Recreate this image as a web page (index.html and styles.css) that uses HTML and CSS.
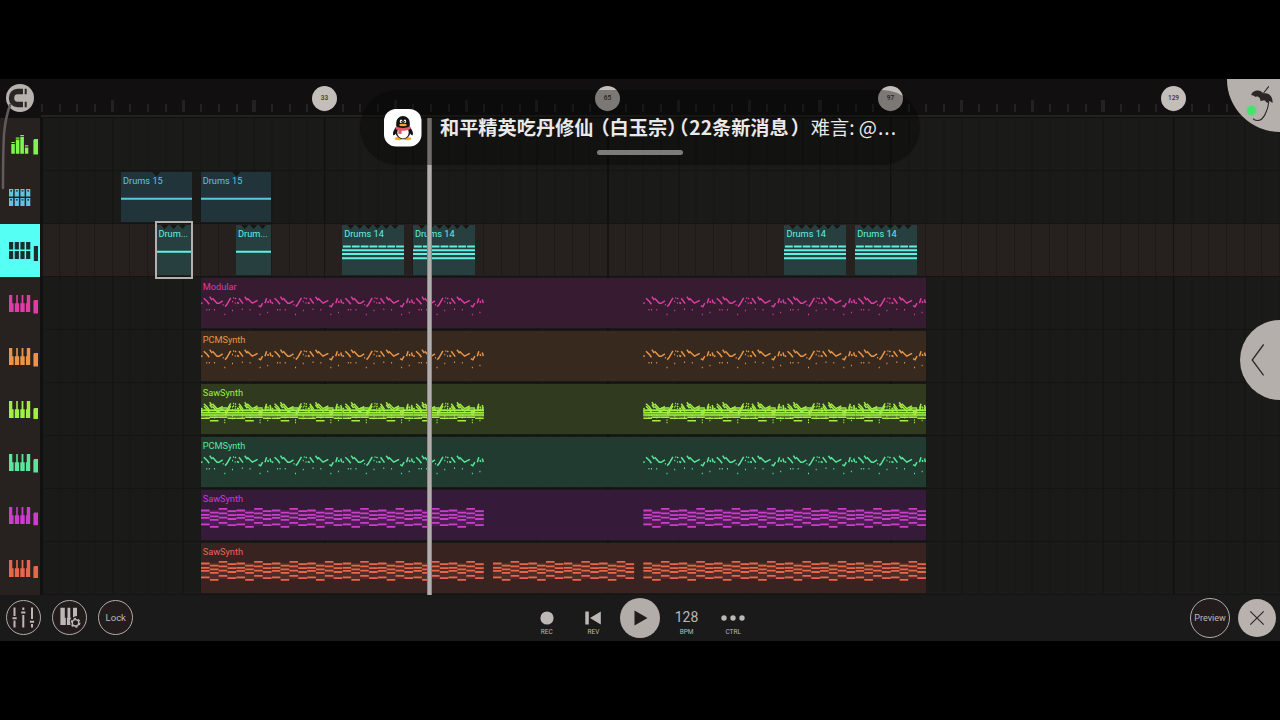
FILE: index.html
```html
<!DOCTYPE html>
<html lang="en">
<head>
    <meta charset="UTF-8">
    <title>Song Editor</title>
    <link rel="stylesheet" href="styles.css">
</head>
<body>

<!-- shared icons and note patterns -->
<svg class="defs" width="0" height="0">
    <symbol id="mixer" viewBox="0 0 40 53">
        <path d="M11.3 26h3.5v9.8h-3.5zM15.8 21.6h3.6v14.2h-3.6zM20.3 19h3.6v16.8h-3.6zM24.9 29.5h3.4v6.3h-3.4z"/>
        <path d="M11.3 23.9h3.5V25h-3.5zM15.8 19.5h3.6v1.2h-3.6zM20.3 17h3.6v1.2h-3.6zM24.9 27.3h3.4v1.1h-3.4zM33.4 22l1-1H38v15.5h-4.6z"/>
    </symbol>
    <symbol id="pads" viewBox="0 0 40 53">
        <path d="M9 18h4.2v7.4H9zM14.7 18h4.2v7.4h-4.2zM20.4 18h4.2v7.4h-4.2zM26.1 18h4.2v7.4h-4.2zM9 27h4.2v7.9H9zM14.7 27h4.2v7.9h-4.2zM20.4 27h4.2v7.9h-4.2zM26.1 27h4.2v7.9h-4.2z"/>
        <path class="pad-dots" d="M10.2 19.8h1.8M15.9 19.8h1.8M21.6 19.8h1.8M27.3 19.8h1.8M10.2 28.8h1.8M15.9 28.8h1.8M21.6 28.8h1.8M27.3 28.8h1.8"/>
    </symbol>
    <symbol id="keys" viewBox="0 0 40 53">
        <path d="M9 18h3.3v8.3h1.3v8.8H9zM16.2 18h1.6v8.3h1.3v8.8h-4.3v-8.8h1.4zM21.6 18h1.8v8.3h1.3v8.8h-4.4v-8.8h1.3zM26.8 18h3.4v17.1h-4.3v-8.8h.9z"/>
    </symbol>
    <symbol id="phrase" viewBox="0 0 71 50" overflow="visible">
        <path d="M0 24.6l1.5-1M2.8 19.3l3.4 3.2 2 2.8M8.7 17.7l2.3 3.4M11.5 19.3l4.5 5h2l3.7-2.4M21.7 25.8h1M24 27.6l1.7-1.7 4-7M32 19h1M31 22.5h1M34 19l1 1M33.7 24h1M36 23.5l2 1M38 19.3l4 5.3M43.7 17.8l2.6 3.6M46.3 19.2l5 5 5.3-2.8M57.6 26.6l2 1.2 2-3.6M64 24.2l1.6-5M66.8 22l.6 2M69 20.5l1 3.6"/>
        <path d="M5.3 30.8h1M7.8 30.8h1M13 30.8h1M23.3 35.4h1M31 31.4h1M40.8 30.2h1M48.6 30.8h1M58.6 35.4h1M66.2 33.4h1"/>
    </symbol>
    <symbol id="melody" viewBox="0 0 283 50">
        <use href="#phrase" width="71" height="50"/>
        <use href="#phrase" x="70.75" width="71" height="50"/>
        <use href="#phrase" x="141.5" width="71" height="50"/>
        <use href="#phrase" x="212.25" width="71" height="50"/>
    </symbol>
    <symbol id="progression" viewBox="0 0 71 50">
        <path d="M0 19.7h8.6M0 24h8.6M0 27h8.6M0 33.6h8.6M8.9 21.9h8.6M8.9 25.6h8.6M8.9 29.1h8.6M8.9 36h8.6M17.7 18h8.6M17.7 22.5h8.6M17.7 26.8h8.6M17.7 32h8.6M26.6 20.3h8.6M26.6 24.3h8.6M26.6 28.2h8.6M26.6 34.4h8.6"/>
        <path d="M35.4 19.7h8.6M35.4 24h8.6M35.4 27h8.6M35.4 33.6h8.6M44.2 21.9h8.6M44.2 25.6h8.6M44.2 29.1h8.6M44.2 36h8.6M53.1 18h8.6M53.1 22.5h8.6M53.1 26.8h8.6M53.1 32h8.6M61.9 20.3h8.6M61.9 24.3h8.6M61.9 28.2h8.6M61.9 34.4h8.6"/>
    </symbol>
    <symbol id="chords" viewBox="0 0 283 50">
        <use href="#progression" width="71" height="50"/>
        <use href="#progression" x="70.75" width="71" height="50"/>
        <use href="#progression" x="141.5" width="71" height="50"/>
        <use href="#progression" x="212.25" width="71" height="50"/>
    </symbol>
    <symbol id="chords-half" viewBox="0 0 141.5 50">
        <use href="#progression" width="71" height="50"/>
        <use href="#progression" x="70.75" width="71" height="50"/>
    </symbol>
    <symbol id="low-progression" viewBox="0 0 71 50">
        <path d="M0 25.5h71M0 28h71M0 30.3h71"/>
        <path d="M0 33.6h8.6M8.9 32.5h8.6M8.9 36h8.6M17.7 32.5h8.6M26.6 33.6h8.6M35.4 33.6h8.6M44.2 32.5h8.6M44.2 36h8.6M53.1 32.5h8.6M61.9 33.6h8.6M17.7 23.3h8.6M53.1 23.3h8.6"/>
    </symbol>
    <symbol id="low-chords" viewBox="0 0 283 50">
        <use href="#low-progression" width="71" height="50"/>
        <use href="#low-progression" x="70.75" width="71" height="50"/>
        <use href="#low-progression" x="141.5" width="71" height="50"/>
        <use href="#low-progression" x="212.25" width="71" height="50"/>
    </symbol>
    <symbol id="beat14" viewBox="0 0 62 50">
        <path class="notch" d="M5.2 0h7.2l-3.6 4zM14 0h7.2l-3.6 4zM22.9 0h7.2l-3.6 4zM31.7 0h7.2l-3.6 4zM40.6 0h7.2l-3.6 4zM49.4 0h7.2l-3.6 4z"/>
        <path d="M1 21.6h61" stroke-dasharray="7.8 1.05"/>
        <path d="M0 25.3h62M0 29h62M0 33.2h62"/>
    </symbol>
</svg>

<div class="app">
    <header class="ruler">
        <button class="magnet" aria-label="Snap">
            <svg width="28" height="28" viewBox="0 0 28 28">
                <path d="M17 7.5h-5.5c-3.5 0-6 2.5-6 6.5s2.5 6.5 6 6.5H17" fill="none" stroke="#2b2626" stroke-width="5.4"/>
                <path d="M18.7 4.8h2v5.4h-2zM18.7 17.8h2v5.4h-2z" fill="#2b2626"/>
            </svg>
        </button>
        <div class="bars">
            <span class="marker" style="grid-column: 33">33</span>
            <span class="marker" style="grid-column: 65">65</span>
            <span class="marker" style="grid-column: 97">97</span>
            <span class="marker" style="grid-column: 129">129</span>
        </div>
    </header>

    <main class="tracks">
        <div class="track">
            <div class="head lime"><svg><use href="#mixer"/></svg></div>
            <div class="lane"></div>
        </div>
        <div class="track">
            <div class="head sky"><svg><use href="#pads"/></svg></div>
            <div class="lane">
                <div class="clip sky" style="grid-column: 10 / span 8">
                    <svg><path class="notch" d="M31.4 0h8l-4 4.4z"/><path d="M0 26.8h71"/></svg>
                    <span>Drums 15</span>
                </div>
                <div class="clip sky" style="grid-column: 19 / span 8">
                    <svg><path class="notch" d="M31.4 0h8l-4 4.4z"/><path d="M0 26.8h71"/></svg>
                    <span>Drums 15</span>
                </div>
            </div>
        </div>
        <div class="track selected">
            <div class="head aqua"><svg><use href="#pads"/><path d="M33.8 22h4.2v15h-4.2z"/></svg></div>
            <div class="lane">
                <div class="clip aqua picked" style="grid-column: 14 / span 4">
                    <svg><path class="notch" d="M5.2 0h7.2l-3.6 4zM14 0h7.2l-3.6 4zM22.9 0h7.2l-3.6 4z"/><path d="M0 26.8h36"/></svg>
                    <span>Drum...</span>
                </div>
                <div class="clip aqua" style="grid-column: 23 / span 4">
                    <svg><path class="notch" d="M5.2 0h7.2l-3.6 4zM14 0h7.2l-3.6 4zM22.9 0h7.2l-3.6 4z"/><path d="M0 26.8h36"/></svg>
                    <span>Drum...</span>
                </div>
                <div class="clip aqua" style="grid-column: 35 / span 7">
                    <svg><use href="#beat14" width="62" height="50"/></svg>
                    <span>Drums 14</span>
                </div>
                <div class="clip aqua" style="grid-column: 43 / span 7">
                    <svg><use href="#beat14" width="62" height="50"/></svg>
                    <span>Drums 14</span>
                </div>
                <div class="clip aqua" style="grid-column: 85 / span 7">
                    <svg><use href="#beat14" width="62" height="50"/></svg>
                    <span>Drums 14</span>
                </div>
                <div class="clip aqua" style="grid-column: 93 / span 7">
                    <svg><use href="#beat14" width="62" height="50"/></svg>
                    <span>Drums 14</span>
                </div>
            </div>
        </div>
        <div class="track">
            <div class="head pink"><svg><use href="#keys"/><path d="M33.4 24l1-1H38v13.5h-4.6z"/></svg></div>
            <div class="lane">
                <div class="clip pink melodic" style="grid-column: 19 / span 82">
                    <svg><use href="#melody" y="1" width="283" height="50"/><use href="#melody" x="442.2" y="1" width="283" height="50"/></svg>
                    <span>Modular</span>
                </div>
            </div>
        </div>
        <div class="track">
            <div class="head orange"><svg><use href="#keys"/><path d="M33.4 24l1-1H38v13.5h-4.6z"/></svg></div>
            <div class="lane">
                <div class="clip orange melodic" style="grid-column: 19 / span 82">
                    <svg><use href="#melody" y="1" width="283" height="50"/><use href="#melody" x="442.2" y="1" width="283" height="50"/></svg>
                    <span>PCMSynth</span>
                </div>
            </div>
        </div>
        <div class="track">
            <div class="head green"><svg><use href="#keys"/><path d="M33.4 26l1-1H38v11h-4.6z"/></svg></div>
            <div class="lane">
                <div class="clip green" style="grid-column: 19 / span 82">
                    <svg>
                        <path class="band" d="M0 29h283M442.2 29h283"/>
                        <g class="thin">
                            <use href="#low-chords" y=".7" width="283" height="50"/><use href="#low-chords" x="442.2" y=".7" width="283" height="50"/>
                            <use href="#melody" y=".5" width="283" height="50"/><use href="#melody" x="442.2" y=".5" width="283" height="50"/>
                            <use href="#melody" y="3" width="283" height="50"/><use href="#melody" x="442.2" y="3" width="283" height="50"/>
                        </g>
                    </svg>
                    <span>SawSynth</span>
                </div>
            </div>
        </div>
        <div class="track">
            <div class="head mint"><svg><use href="#keys"/><path d="M33.4 24l1-1H38v13.5h-4.6z"/></svg></div>
            <div class="lane">
                <div class="clip mint melodic" style="grid-column: 19 / span 82">
                    <svg><use href="#melody" y="1" width="283" height="50"/><use href="#melody" x="442.2" y="1" width="283" height="50"/></svg>
                    <span>PCMSynth</span>
                </div>
            </div>
        </div>
        <div class="track">
            <div class="head purple"><svg><use href="#keys"/><path d="M33.4 24.5l1-1H38v12.8h-4.6z"/></svg></div>
            <div class="lane">
                <div class="clip purple" style="grid-column: 19 / span 82">
                    <svg>
                        <path class="band" d="M0 28h283M442.2 28h283"/>
                        <use href="#chords" y=".8" width="283" height="50"/><use href="#chords" x="442.2" y=".8" width="283" height="50"/>
                    </svg>
                    <span>SawSynth</span>
                </div>
            </div>
        </div>
        <div class="track">
            <div class="head red"><svg><use href="#keys"/><path d="M33.4 25l1-1H38v12h-4.6z"/></svg></div>
            <div class="lane">
                <div class="clip red" style="grid-column: 19 / span 82">
                    <svg>
                        <path class="band" d="M0 28h283M291.9 28h141.5M442.2 28h283"/>
                        <use href="#chords" y=".8" width="283" height="50"/><use href="#chords-half" x="291.9" y=".8" width="141.5" height="50"/><use href="#chords" x="442.2" y=".8" width="283" height="50"/>
                    </svg>
                    <span>SawSynth</span>
                </div>
            </div>
        </div>
        <div class="playhead"></div>
    </main>

    <footer class="toolbar">
        <div class="tools">
            <button class="round" aria-label="Mixer">
                <svg width="35" height="35" viewBox="0 0 35 35" fill="none" stroke="#bdb8b5" stroke-width="2">
                    <path d="M8.5 7.5v8.5M8.5 20.5v7M17.3 7.5v2.5M17.3 15v12.5M26 7.5v11.5M26 24v3.5M6.5 18.2h4.2M15.2 12.5h4.2M23.9 21.7h4.2"/>
                </svg>
            </button>
            <button class="round" aria-label="Instrument settings">
                <svg width="35" height="35" viewBox="0 0 35 35">
                    <path fill="#bdb8b5" d="M8.4 7.7h4.4v10h1V25H8.4zM15.5 7.7h2.8v10h1l-1.5 3 .8 4.3h-3.7v-7.3h.6zM21 7.7h4V16l-2.2.5-1.8 1z"/>
                    <circle cx="23.5" cy="22.8" r="3.2" fill="none" stroke="#bdb8b5" stroke-width="1.4"/>
                    <circle cx="23.5" cy="22.8" r="4.3" fill="none" stroke="#bdb8b5" stroke-width="1.3" stroke-dasharray="2.25 2.25"/>
                </svg>
            </button>
            <button class="round">Lock</button>
        </div>
        <div class="transport">
            <div class="control">
                <svg width="24" height="16" viewBox="0 0 24 16"><circle cx="12" cy="8" r="6.6"/></svg>
                <small>REC</small>
            </div>
            <div class="control">
                <svg width="24" height="16" viewBox="0 0 24 16"><path d="M4.3 1.4h3.5v13H4.3zM19.8 1.4v13L9 7.9z"/></svg>
                <small>REV</small>
            </div>
            <button class="play" aria-label="Play">
                <svg width="40" height="40" viewBox="0 0 40 40"><path d="M14.5 12.5l13 7.5-13 7.5z"/></svg>
            </button>
            <div class="control">
                <b>128</b>
                <small>BPM</small>
            </div>
            <div class="control">
                <svg width="24" height="16" viewBox="0 0 24 16"><circle cx="3" cy="8" r="2.7"/><circle cx="12" cy="8" r="2.7"/><circle cx="21" cy="8" r="2.7"/></svg>
                <small>CTRL</small>
            </div>
        </div>
        <div class="actions">
            <button class="round preview">Preview</button>
            <button class="close" aria-label="Close">
                <svg width="38" height="38" viewBox="0 0 38 38"><path d="M12.3 12.3l13.4 13.4M25.7 12.3L12.3 25.7"/></svg>
            </button>
        </div>
    </footer>

    <!-- things floating over the song -->
    <svg class="cord" width="16" height="90" viewBox="0 0 16 90">
        <path d="M10 2C3 22 3.2 35 3 85"/>
    </svg>
    <div class="logo">
        <svg width="54" height="54" viewBox="0 0 54 54">
            <path d="M24.2 16c1-5 9.300-6.500 12-1.500 5.800-1.200 10 3.200 9.300 9.500l-2.700-2-2.600 2-2.700-2.700-4 .7c0-3.300-2.700-5.300-4.700-4l-2-1.300z" fill="#2b2727"/>
            <path d="M36.200 14.500l5.600-7.200M41.800 22.700C41 32 36 41 32 41.300q-4 .7-6-1.600" fill="none" stroke="#2b2727" stroke-width="1.100"/>
        </svg>
        <i></i>
    </div>
    <button class="drawer" aria-label="Open panel">
        <svg width="14" height="34" viewBox="0 0 14 34"><path d="M12.6 1.5L1.2 17l11.4 15.3"/></svg>
    </button>
    <div class="toast">
        <svg class="qq" width="38" height="38" viewBox="0 0 38 38">
            <rect width="37.5" height="37.5" rx="12" fill="#fff"/>
            <ellipse cx="14.8" cy="29.6" rx="4.2" ry="1.6" fill="#f7a823"/>
            <ellipse cx="23.2" cy="29.6" rx="4.2" ry="1.6" fill="#f7a823"/>
            <path d="M12.3 17.5c-2.5 3.3-4 6.8-3 8.5.7.7 1.9-.5 2.8-1.8h13.8c.9 1.3 2.1 2.5 2.8 1.8 1-1.7-.5-5.2-3-8.5z" fill="#111"/>
            <ellipse cx="19" cy="23" rx="7.3" ry="7.2" fill="#111"/>
            <ellipse cx="19" cy="23.5" rx="5.7" ry="6" fill="#fff"/>
            <path d="M12.2 17v-3.3a6.8 6.6 0 0 1 13.6 0V17c-2 3-11.6 3-13.6 0z" fill="#111"/>
            <ellipse cx="17.1" cy="12.4" rx="1.3" ry="1.8" fill="#fff"/>
            <ellipse cx="20.9" cy="12.4" rx="1.3" ry="1.8" fill="#fff"/>
            <circle cx="17.4" cy="12.7" r=".7" fill="#111"/>
            <circle cx="20.6" cy="12.7" r=".7" fill="#111"/>
            <ellipse cx="19" cy="16" rx="3.8" ry="1.2" fill="#f7a823"/>
            <path d="M12 17.3c4 2.3 10 2.3 14 0l.7 2.5c-2.7 1.6-6 2.2-9 2l-.3 3.2-3.2-.3.2-3.5-2.7-1z" fill="#e2586a"/>
        </svg>
        <p><strong>和平精英吃丹修仙<span class="paren open">（</span>白玉宗<span class="paren">）</span><span class="paren two">（</span>22条新消息<span class="paren end">）</span></strong>难言: @<span class="dots">...</span></p>
        <div class="grip"></div>
    </div>
</div>

</body>
</html>
```
FILE: styles.css
```css
* {
    box-sizing: border-box;
}
body {
    margin: 0;
    background: #000;
    padding-top: 79px;
    height: 720px;
    overflow: hidden;
    font-family: Roboto, "Liberation Sans", sans-serif;
}
button {
    border: none;
    padding: 0;
    font-family: inherit;
}
.defs {
    position: absolute;
}
.app {
    position: relative;
    width: 1280px;
    height: 562px;
    overflow: hidden;
    background: #1a1a19;
}

/* ruler */
.ruler {
    height: 39px;
    display: flex;
    background: #110f10;
}
.magnet {
    width: 28px;
    height: 28px;
    margin: 5px 7px 0 6px;
    border-radius: 50%;
    background: #b8b2ae;
    flex: none;
}
.magnet svg {
    display: block;
}
.bars,
.lane {
    display: grid;
    grid-template-columns: repeat(140, 8.84375px);
    padding-left: 1.5px;
    flex: 1;
    min-width: 0;
}
.bars {
    align-items: start;
    background:
        linear-gradient(#242120, #242120) 0 36px / 100% 2px no-repeat,
        repeating-linear-gradient(90deg, #242121 0 3px, transparent 3px 70.75px) 70.25px 21px / 100% 12px no-repeat,
        repeating-linear-gradient(90deg, #242121 0 2px, transparent 2px 17.6875px) 0 25px / 100% 8px no-repeat;
}
.marker {
    width: 25px;
    height: 25px;
    margin: 7px 0 0 -13.5px;
    border-radius: 50%;
    background: #c3beba;
    color: #383434;
    font-size: 6.5px;
    font-weight: 500;
    line-height: 25px;
    text-align: center;
}

/* tracks */
.tracks {
    position: relative;
    height: 477px;
    overflow: hidden;
}
.track {
    display: flex;
    height: 53px;
}
.head {
    width: 41px;
    border-right: 1.5px solid #111010;
    background: #27211f;
    flex: none;
}
.head svg {
    display: block;
    width: 40px;
    height: 53px;
    fill: currentColor;
}
.pad-dots {
    stroke: #27211f;
    stroke-width: 1.2;
}
.lane {
    padding-left: .5px;
    border-bottom: 1px solid #131413;
    background:
        repeating-linear-gradient(90deg, #0f1010 0 1.5px, transparent 1.5px 283px) 0 0 / 100%,
        repeating-linear-gradient(90deg, #131414 0 1px, transparent 1px 70.75px) .5px 0 / 100%,
        repeating-linear-gradient(90deg, #151616 0 1px, transparent 1px 17.6875px) .5px 0 / 100%;
    background-color: #1a1a19;
}
.selected .lane {
    background:
        repeating-linear-gradient(90deg, #181414 0 1.5px, transparent 1.5px 283px),
        repeating-linear-gradient(90deg, #1e1a19 0 1px, transparent 1px 17.6875px);
    background-color: #26201e;
}
.selected .head {
    background: #56fff4;
    color: #16302e;
}
.selected .pad-dots {
    stroke: #56fff4;
}

/* clips */
.clip {
    display: grid;
    height: 50px;
    margin-top: 1px;
    min-width: 0;
}
.clip svg,
.clip span {
    grid-area: 1 / 1;
}
.clip svg {
    width: 100%;
    height: 50px;
    stroke: currentColor;
    stroke-width: 1.8;
    fill: none;
}
.clip span {
    padding: 2px 0 0 2px;
    font-size: 9.2px;
    line-height: 13px;
    white-space: nowrap;
}
.clip .notch,
.notch {
    fill: #171616;
    stroke: none;
}
.clip.sky svg,
.clip.aqua svg {
    stroke-width: 2;
}
.clip.melodic svg,
.clip .thin {
    stroke-width: 1.5;
}
.picked {
    position: relative;
}
.picked::after {
    content: "";
    position: absolute;
    inset: -4px -1px;
    border: 2px solid #b4b0af;
}
.band {
    stroke-width: 16;
    opacity: .14;
}
.green .band {
    stroke-width: 8;
    opacity: .35;
}

.lime { color: #80f54e; }
.sky { color: #5fc5e6; }
.aqua { color: #62f0e4; }
.pink { color: #dd3ea4; }
.orange { color: #ea9548; }
.green { color: #a2ee45; }
.mint { color: #58e89c; }
.purple { color: #cb3ecb; }
.red { color: #e8664b; }

.clip.sky { background: #21343a; }
.clip.aqua { background: #273f3e; }
.clip.pink { background: #371b30; }
.clip.orange { background: #37291e; }
.clip.green { background: #2f3a1e; }
.clip.mint { background: #223b30; }
.clip.purple { background: #351a39; }
.clip.red { background: #392320; }

.playhead {
    position: absolute;
    left: 427px;
    top: 0;
    width: 5px;
    height: 100%;
    background: #b3aeae;
    border: solid #8b8787;
    border-width: 0 1px;
}

/* toolbar */
.toolbar {
    display: grid;
    grid-template-columns: 1fr 233px 1fr;
    height: 46px;
    padding-bottom: 1px;
    background: #1b1a1a;
    color: #bdb8b5;
}
.tools,
.actions {
    display: flex;
    align-items: center;
}
.tools {
    gap: 11.4px;
    padding-left: 5.5px;
}
.actions {
    justify-content: flex-end;
    gap: 7.5px;
    padding-right: 4.5px;
}
.round {
    width: 35px;
    height: 35px;
    display: flex;
    align-items: center;
    justify-content: center;
    border: 1.4px solid #b2adaa;
    border-radius: 50%;
    background: #221d1c;
    color: #bdb8b5;
    font-size: 9.5px;
}
.round svg {
    flex: none;
}
.preview {
    width: 40px;
    height: 40px;
    font-size: 9px;
}
.close {
    width: 38px;
    height: 38px;
    border-radius: 50%;
    background: #b8b1ae;
}
.close svg {
    display: block;
    stroke: #2d2929;
    stroke-width: 1.2;
}
.transport {
    display: grid;
    grid-template-columns: repeat(5, 1fr);
    align-items: center;
}
.control {
    display: flex;
    flex-direction: column;
    align-items: center;
    padding-top: 12px;
}
.control svg {
    fill: currentColor;
}
.control b {
    height: 16px;
    font-size: 14px;
    font-weight: 400;
    line-height: 14px;
    letter-spacing: .1px;
}
.control small {
    margin-top: 2px;
    font-size: 6.5px;
    line-height: 9px;
}
.play {
    width: 40px;
    height: 40px;
    justify-self: center;
    border-radius: 50%;
    background: #b3ada9;
}
.play svg {
    display: block;
    fill: #211d1d;
}

/* floating pieces */
.cord {
    position: absolute;
    left: 0;
    top: 24px;
    fill: none;
    stroke: #625b5d;
    stroke-width: 2.5;
    stroke-linecap: round;
}
.logo {
    position: absolute;
    right: 0;
    top: 0;
    width: 53.5px;
    height: 53px;
    border-radius: 0 0 0 100%;
    background: #b5b0ac;
}
.logo svg {
    display: block;
}
.logo i {
    position: absolute;
    left: 20px;
    top: 27px;
    width: 9px;
    height: 9px;
    border-radius: 50%;
    background: #43e46c;
    box-shadow: 0 0 2px #43e46c;
}
.drawer {
    position: absolute;
    right: -40px;
    top: 241px;
    width: 80px;
    height: 80px;
    border-radius: 50%;
    background: #b5afab;
    text-align: left;
}
.drawer svg {
    display: block;
    margin-left: 11px;
    fill: none;
    stroke: #2d2929;
    stroke-width: 1.3;
}
.toast {
    position: absolute;
    left: 360px;
    top: 10.5px;
    width: 560px;
    height: 75.5px;
    border-radius: 38px;
    background: rgba(5, 5, 5, .38);
    color: #e9e9e9;
    display: flex;
    padding: 19px 20px 0 24px;
    gap: 18px;
}
.qq {
    flex: none;
}
.toast p {
    margin: 3.5px 0 0;
    font-family: "Noto Sans CJK SC", sans-serif;
    font-size: 19.2px;
    line-height: 30px;
    white-space: nowrap;
}
.toast strong {
    font-weight: 700;
}
.paren {
    font-feature-settings: "halt";
}
.open {
    margin-left: 6.5px;
}
.two {
    margin: 0 1px 0 2px;
}
.end {
    margin: 0 10.5px 0 2px;
}
.dots {
    margin-left: 1px;
    letter-spacing: 1px;
}
.grip {
    position: absolute;
    left: 237px;
    top: 60.5px;
    width: 86px;
    height: 5px;
    border-radius: 3px;
    background: #7c7c7c;
}
```
